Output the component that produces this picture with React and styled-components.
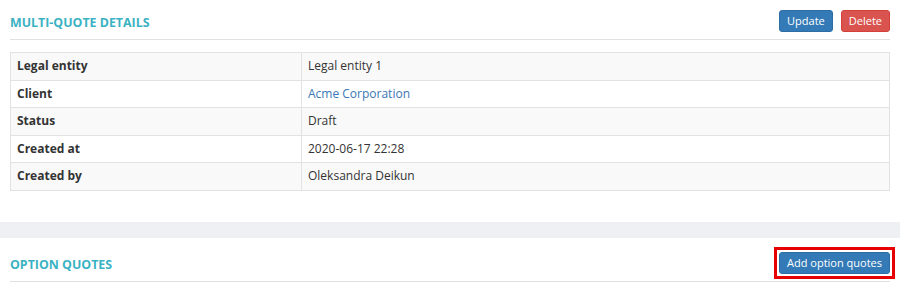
import styled, { createGlobalStyle } from "styled-components";

const GlobalStyle = createGlobalStyle`
  html, body {
    margin: 0;
    padding: 0;
    background: #fff;
    font-family: "Open Sans", "Liberation Sans", sans-serif;
    color: #333;
  }
`;

const Page = styled.div`
  width: 900px;
  display: flex;
  flex-direction: column;
`;

const Section = styled.section`
  background: #fff;
  padding: ${(p) => p.$top}px 10px ${(p) => p.$bottom}px;
`;

const Band = styled.div`
  height: 16px;
  background: #eef0f4;
`;

const Header = styled.div`
  display: flex;
  align-items: center;
  justify-content: space-between;
  height: 22px;
  padding-bottom: 7px;
  border-bottom: 1px solid #e1e1e1;
`;

const Title = styled.h3`
  margin: 0;
  padding-top: 3px;
  font-size: 12.4px;
  font-weight: 700;
  color: #3ab2c3;
  text-transform: uppercase;
  line-height: 19px;
`;

const Actions = styled.div`
  display: flex;
  gap: 8px;
`;

const Button = styled.button`
  font-family: "Open Sans", "Liberation Sans", sans-serif;
  font-size: 11px;
  line-height: 14px;
  padding: 3px 7px;
  border-radius: 3px;
  color: #fff;
  cursor: pointer;
  background: ${(p) => (p.$variant === "danger" ? "#d9534f" : "#337ab7")};
  border: 1px solid ${(p) => (p.$variant === "danger" ? "#d43f3a" : "#2e6da4")};
`;

const Highlight = styled.span`
  display: inline-flex;
  border: 3px solid #e60000;
  padding: 2px;
  margin: -5px;
`;

const Table = styled.table`
  width: 100%;
  margin-top: 12px;
  border-collapse: collapse;
  border: 1px solid #e2e2e2;
  font-size: 12px;
`;

const Row = styled.tr`
  background: ${(p) => (p.$odd ? "#f9f9f9" : "#fff")};
`;

const Cell = styled.td`
  padding: 5px 6px;
  line-height: 16.6px;
  border: 1px solid #e2e2e2;
  font-weight: ${(p) => (p.$label ? 700 : 400)};
  width: ${(p) => (p.$label ? "278px" : "auto")};
`;

const Link = styled.a`
  color: #3a77b4;
  text-decoration: none;
`;

const details = [
  { label: "Legal entity", value: "Legal entity 1" },
  { label: "Client", value: "Acme Corporation", link: true },
  { label: "Status", value: "Draft" },
  { label: "Created at", value: "2020-06-17 22:28" },
  { label: "Created by", value: "Oleksandra Deikun" },
];

export default function App() {
  return (
    <Page>
      <GlobalStyle />
      <Section $top={10} $bottom={31}>
        <Header>
          <Title>Multi-quote details</Title>
          <Actions>
            <Button>Update</Button>
            <Button $variant="danger">Delete</Button>
          </Actions>
        </Header>
        <Table>
          <tbody>
            {details.map((d, i) => (
              <Row key={d.label} $odd={i % 2 === 0}>
                <Cell $label>{d.label}</Cell>
                <Cell>{d.link ? <Link href="#">{d.value}</Link> : d.value}</Cell>
              </Row>
            ))}
          </tbody>
        </Table>
      </Section>
      <Band />
      <Section $top={14} $bottom={10}>
        <Header>
          <Title>Option quotes</Title>
          <Highlight>
            <Button>Add option quotes</Button>
          </Highlight>
        </Header>
      </Section>
    </Page>
  );
}
